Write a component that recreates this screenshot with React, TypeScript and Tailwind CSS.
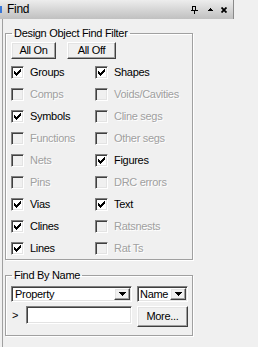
import React from "react";

const CHECK_PIXELS = [
  [6, 0], [5, 1], [6, 1], [0, 2], [4, 2], [5, 2], [6, 2],
  [0, 3], [1, 3], [3, 3], [4, 3], [5, 3],
  [0, 4], [1, 4], [2, 4], [3, 4], [4, 4],
  [1, 5], [2, 5], [3, 5], [2, 6],
];

const CheckBox = ({ checked, disabled }: { checked?: boolean; disabled?: boolean }) => (
  <span
    className={`flex items-center justify-center w-[13px] h-[13px] shrink-0 border border-t-[#808080] border-l-[#808080] border-r-white border-b-white shadow-[inset_1px_1px_0_#404040,inset_-1px_-1px_0_#e3e3e3] ${
      disabled ? "bg-[#f0f0f0]" : "bg-white"
    }`}
  >
    {checked && (
      <svg width="7" height="7" viewBox="0 0 7 7" shapeRendering="crispEdges">
        {CHECK_PIXELS.map(([x, y]) => (
          <rect key={`${x}-${y}`} x={x} y={y} width="1" height="1" fill="#000" />
        ))}
      </svg>
    )}
  </span>
);

const Item = ({ label, checked, disabled }: { label: string; checked?: boolean; disabled?: boolean }) => (
  <div className="h-[22px] flex items-center gap-[6px]">
    <CheckBox checked={checked} disabled={disabled} />
    <span className={disabled ? "text-[#a0a0a0] [text-shadow:1px_1px_0_#fff]" : "text-black"}>{label}</span>
  </div>
);

const rows: [string, boolean, boolean, string, boolean, boolean][] = [
  ["Groups", true, false, "Shapes", true, false],
  ["Comps", false, true, "Voids/Cavities", false, true],
  ["Symbols", true, false, "Cline segs", false, true],
  ["Functions", false, true, "Other segs", false, true],
  ["Nets", false, true, "Figures", true, false],
  ["Pins", false, true, "DRC errors", false, true],
  ["Vias", true, false, "Text", true, false],
  ["Clines", true, false, "Ratsnests", false, true],
  ["Lines", true, false, "Rat Ts", false, true],
];

const btn =
  "flex items-center justify-center bg-[#f0f0f0] border border-t-white border-l-white border-r-[#404040] border-b-[#404040] shadow-[inset_-1px_-1px_0_#a0a0a0,inset_1px_1px_0_#e3e3e3]";

const sunken =
  "bg-white border border-t-[#808080] border-l-[#808080] border-r-white border-b-white shadow-[inset_1px_1px_0_#404040,inset_-1px_-1px_0_#e3e3e3]";

const Arrow = () => (
  <span className={`${btn} w-[16px] h-full shrink-0`}>
    <svg width="7" height="4" viewBox="0 0 7 4" shapeRendering="crispEdges">
      <path d="M0 0h7v1H0zM1 1h5v1H1zM2 2h3v1H2zM3 3h1v1H3z" fill="#000" />
    </svg>
  </span>
);

export default function App() {
  return (
    <div className="w-[258px] h-[347px] overflow-hidden bg-[#f0f0f0] text-[11px] leading-[13px] tracking-[-0.3px] text-black font-['Liberation_Sans',Arial,sans-serif]">
      {/* title bar */}
      <div className="w-[234px] h-[19px] flex items-center bg-gradient-to-b from-[#ededed] to-[#c0c0c0] border-r border-[#8a8a8a]">
        <span className="w-[2px] h-[7px] bg-[#3a78d8]" />
        <span className="ml-[5px] text-[12px]">Find</span>
        <div className="ml-auto mr-[6px] flex items-center">
          <svg width="7" height="8" viewBox="0 0 7 8" shapeRendering="crispEdges" className="mr-[10px]">
            <path d="M1 0h4v1H1zM1 1h1v3H1zM4 1h1v3H4zM0 4h7v1H0zM3 5h1v3H3z" fill="#000" />
          </svg>
          <svg width="5" height="3" viewBox="0 0 5 3" shapeRendering="crispEdges" className="mr-[8px]">
            <path d="M2 0h1v1H2zM1 1h3v1H1zM0 2h5v1H0z" fill="#000" />
          </svg>
          <svg width="6" height="6" viewBox="0 0 6 6">
            <path d="M0.5 0.5L5.5 5.5M5.5 0.5L0.5 5.5" stroke="#000" strokeWidth="1.8" />
          </svg>
        </div>
      </div>

      <div className="ml-[2px] h-[328px] border-l border-[#a0a0a0] pl-[2px] pt-[8px]">
        {/* Design Object Find Filter */}
        <fieldset className="w-[188px] border border-[#a0a0a0] shadow-[1px_1px_0_#fff,inset_1px_1px_0_#fff]">
          <legend className="ml-[6px] px-[2px] leading-[13px]">Design Object Find Filter</legend>
          <div className="mt-[2px] pl-[5px] flex">
            <button className={`${btn} w-[45px] h-[17px]`}>All On</button>
            <button className={`${btn} ml-[11px] w-[49px] h-[17px]`}>All Off</button>
          </div>
          <div className="mt-[2px] pl-[5px] grid grid-cols-[84px_1fr]">
            {rows.map(([a, ac, ad, b, bc, bd]) => (
              <React.Fragment key={a}>
                <Item label={a} checked={ac} disabled={ad} />
                <Item label={b} checked={bc} disabled={bd} />
              </React.Fragment>
            ))}
          </div>
        </fieldset>

        {/* Find By Name */}
        <fieldset className="mt-[9px] w-[188px] border border-[#a0a0a0] shadow-[1px_1px_0_#fff,inset_1px_1px_0_#fff] pb-[8px]">
          <legend className="ml-[6px] px-[2px] leading-[13px]">Find By Name</legend>
          <div className="mt-[4px] pl-[5px] flex gap-[5px]">
            <div className={`${sunken} w-[121px] h-[16px] flex items-center p-[1px]`}>
              <span className="flex-1 pl-[2px] leading-[12px]">Property</span>
              <Arrow />
            </div>
            <div className={`${sunken} w-[51px] h-[16px] flex items-center p-[1px]`}>
              <span className="flex-1 pl-[1px] leading-[12px] whitespace-nowrap">Name</span>
              <Arrow />
            </div>
          </div>
          <div className="mt-[4px] pl-[5px] flex items-start">
            <span className="w-[15px] mt-[3px] pl-[1px]">&gt;</span>
            <div className={`${sunken} w-[106px] h-[18px]`} />
            <button className={`${btn} ml-[5px] w-[51px] h-[21px]`}>More...</button>
          </div>
        </fieldset>
      </div>
    </div>
  );
}
